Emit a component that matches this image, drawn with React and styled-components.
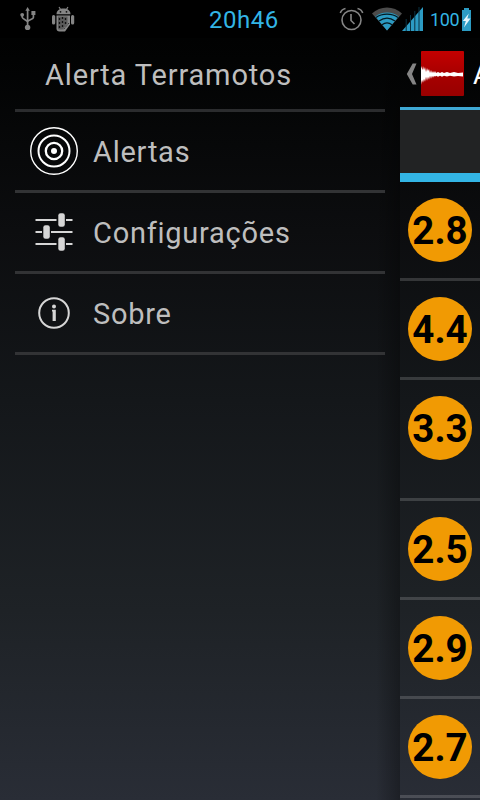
import styled, { createGlobalStyle } from 'styled-components';

const GlobalStyle = createGlobalStyle`
  body {
    margin: 0;
    background: #000;
    font-family: Roboto, 'Liberation Sans', sans-serif;
  }
`;

const Screen = styled.div`
  width: 480px;
  height: 800px;
  display: flex;
  flex-direction: column;
  overflow: hidden;
  background: linear-gradient(#000 0, #020303 60px, #0c0d0f 230px, #14171a 400px, #1e2226 610px, #292d36 800px);
`;

const StatusBar = styled.header`
  height: 38px;
  flex: none;
  display: grid;
  grid-template-columns: 209px 130px 1fr;
  align-items: center;
  background: #000;
  color: #33b5e5;
`;

const StatusIcons = styled.div`
  display: flex;
  align-items: center;
  gap: ${({ $gap }) => $gap || 0}px;
  padding-left: ${({ $left }) => $left || 0}px;

  svg {
    flex: none;
  }
`;

const Clock = styled.span`
  font-size: 24px;
  line-height: 36px;
  letter-spacing: 0.5px;
  padding-top: 2px;
`;

const BatteryLevel = styled.span`
  width: 32px;
  font-size: 18px;
  line-height: 36px;
  letter-spacing: -0.4px;
  padding-top: 2px;
`;

const Content = styled.div`
  flex: 1;
  display: flex;
  min-height: 0;
`;

const Drawer = styled.nav`
  width: 400px;
  padding: 0 15px;
  box-sizing: border-box;
  background: linear-gradient(90deg, transparent 376px, rgba(0, 0, 0, 0.3) 400px);
`;

const DrawerTitle = styled.h1`
  height: 71px;
  margin: 0;
  padding-left: 30px;
  border-bottom: 3px solid #2b2c2e;
  color: #bebebe;
  font-size: 29px;
  font-weight: 400;
  line-height: 75px;
  letter-spacing: 0.85px;
`;

const MenuItem = styled.a`
  height: 78px;
  display: flex;
  align-items: center;
  gap: 15px;
  padding-left: 15px;
  border-bottom: 3px solid #323335;
  color: #bebebe;
  font-size: 29px;
  letter-spacing: 0.75px;
`;

const MenuLabel = styled.span`
  padding-top: 2px;
`;

const MainPanel = styled.main`
  width: 80px;
  overflow: hidden;
`;

const ActionBar = styled.div`
  height: 69px;
  display: flex;
  align-items: center;
  padding-left: 5px;
  border-bottom: 3px solid #3fa9d5;
  color: #fff;
  font-size: 27px;

  svg {
    flex: none;
    margin-top: 2px;
  }
`;

const AppName = styled.span`
  margin-left: 9px;
  padding-top: 4px;
`;

const TabStrip = styled.div`
  height: 63px;
  background: #222324;
  border-bottom: 9px solid #33b5e5;
`;

const QuakeRow = styled.div`
  height: ${({ $tall }) => ($tall ? 118 : 96)}px;
  padding: 16px 8px 0;
  box-sizing: border-box;
`;

const Divider = styled.hr`
  height: 3px;
  margin: 0;
  border: 0;
  background: rgba(255, 255, 255, 0.16);
`;

const Magnitude = styled.div`
  width: 64px;
  height: 64px;
  border-radius: 50%;
  background: #f19a03;
  color: #000;
  font-size: 38.5px;
  font-weight: 700;
  line-height: 65px;
  text-align: center;
`;

const quakes = [
  { magnitude: '2.8' },
  { magnitude: '4.4' },
  { magnitude: '3.3', tall: true },
  { magnitude: '2.5' },
  { magnitude: '2.9' },
  { magnitude: '2.7' },
];

const UsbIcon = () => (
  <svg width="16" height="24" viewBox="0 0 16 24" fill="none" stroke="#858585" strokeWidth="1.7">
    <path d="M7.6 3v17M2.2 7v3.3c0 1.7 5.2 2.6 5.4 4.8M13.4 6v4.4c0 1.8-5.6 2.3-5.8 4.6" />
    <path d="M7.6 0l2.2 3.8H5.4z" fill="#858585" stroke="none" />
    <circle cx="2.2" cy="7.8" r="1.9" fill="#858585" stroke="none" />
    <path d="M11.4 4h4v4h-4z" fill="#858585" stroke="none" />
    <circle cx="7.6" cy="20.4" r="2.7" fill="#858585" stroke="none" />
  </svg>
);

const AndroidIcon = () => (
  <svg width="24" height="26" viewBox="0 0 24 26" fill="#858585">
    <path d="M7 1l2 3M16 1l-2 3" stroke="#858585" strokeWidth="1.2" />
    <path d="M4.500 8.200C4.500 4.500 7.500 2.600 11.500 2.600s7 1.900 7 5.600z" />
    <rect x="0" y="9" width="3.200" height="9.500" rx="1.500" />
    <rect x="19" y="9" width="3.200" height="9.500" rx="1.500" />
    <path d="M4.500 9.500H18v9L13 25.500H7.500c-2 0-3-1-3-3z" />
    <path d="M6 10.500h9.500v7l-5 6H7.500c-1 0-1.500-.5-1.500-1.500z" fill="#5a5a5a" />
    <path d="M7.500 12v10M10.500 11v11M13.500 12v6" stroke="#111" strokeWidth="1.300" strokeDasharray="2 2" />
    <path d="M17 17l-6 7" stroke="#333" strokeDasharray="2 1" />
    <circle cx="8.500" cy="5.800" r="0.900" fill="#111" />
    <circle cx="14.500" cy="5.800" r="0.900" fill="#111" />
  </svg>
);

const AlarmIcon = () => (
  <svg width="26" height="24" viewBox="0 0 26 24" fill="none" stroke="#858585" strokeWidth="1.600">
    <circle cx="12.500" cy="13" r="9.500" />
    <path d="M12 7v6.500l3.500 3.500M1.300 6C2 3.800 4 2 6.500 1.500M18.500 1.500C21 2 23 3.800 23.700 6" />
  </svg>
);

const WifiIcon = () => (
  <svg width="30" height="24" viewBox="0 0 30 24">
    <path d="M0 6.500C8-1.500 22-1.500 30 6.500L15 23.500z" fill="#4b4b4b" />
    <path d="M3.300 9.500C10 4 20 4 26.700 9.500L15 23.500z" fill="#2c9bc3" />
    <path
      d="M4 10.500C10 6 20 6 26 10.500M7 14c5-3.500 11-3.500 16 0M10 17.700c3-2.200 7-2.200 10 0"
      fill="none"
      stroke="#04171e"
      strokeWidth="1.300"
    />
  </svg>
);

const SignalIcon = () => (
  <svg width="21" height="24" viewBox="0 0 21 24">
    <path d="M0 24L21 0v24z" fill="#2c9bc3" />
    <path d="M4.200 12v12M8.500 8v16M12.800 4v20M17 0v24" stroke="#0b3342" strokeWidth="1" />
  </svg>
);

const BatteryIcon = () => (
  <svg width="9" height="23" viewBox="0 0 9 23">
    <path d="M2 0h5v2h2v21H0V2h2z" fill="#2c9bc3" />
    <path d="M6.800 5.500L.8 13h3l-1.800 6.500L8.500 10.500H5.300z" fill="#e4f4fa" />
  </svg>
);

const TargetIcon = () => (
  <svg width="48" height="48" viewBox="0 0 48 48" fill="none" stroke="#fff">
    <circle cx="24" cy="24" r="23.300" strokeWidth="1.400" />
    <circle cx="24" cy="24" r="15.500" strokeWidth="2" />
    <circle cx="24" cy="24" r="8.200" strokeWidth="2.300" />
    <circle cx="24" cy="24" r="3" fill="#fff" stroke="none" />
  </svg>
);

const SlidersIcon = () => (
  <svg width="48" height="48" viewBox="0 0 48 48" fill="#d6d6d6">
    <path d="M5.500 11h21v2h-21zM36 11h6.500v2H36zM5.500 23H12v2H5.500zM21 23h21.500v2H21zM5.500 35h21v2h-21zM36 35h6.500v2H36z" />
    <rect x="28.300" y="5.300" width="6.500" height="13.400" rx="2.200" />
    <rect x="13.300" y="17.300" width="6.500" height="13.400" rx="2.200" />
    <rect x="28.300" y="29.300" width="6.500" height="13.400" rx="2.200" />
  </svg>
);

const InfoIcon = () => (
  <svg width="48" height="48" viewBox="0 0 48 48">
    <circle cx="24" cy="24" r="14.800" fill="none" stroke="#d6d6d6" strokeWidth="2" />
    <circle cx="24" cy="17.500" r="2" fill="#d6d6d6" />
    <path d="M22 20.800h3.800V32h-3.200v-9.500H22z" fill="#d6d6d6" />
  </svg>
);

const BackIcon = () => (
  <svg width="16" height="24" viewBox="0 0 16 24">
    <path d="M7.700 1.500h3.800L7 12l4.500 10.500H7.700L1.800 12z" fill="#858585" />
  </svg>
);

const SeismographIcon = () => (
  <svg width="43" height="45" viewBox="0 0 43 45">
    <defs>
      <linearGradient id="red" x1="0" y1="0" x2="0" y2="1">
        <stop offset="0" stopColor="#c40000" />
        <stop offset="0.500" stopColor="#a80000" />
        <stop offset="1" stopColor="#980000" />
      </linearGradient>
    </defs>
    <rect width="43" height="45" rx="1" fill="url(#red)" />
    <path
      d="M0 15l1.500 4 .5-4 1 4 1-3 1 5 1-4 1 3 1-2 1 4 1-3 1 3 1-2 1 2 1-2 1 2 2-1 2 1 2-1 2 1 3-1 3 1 4-1 4 1 5-.5v4l-5-.5-4 .5-4-.7-3 .7-3-.7-2 1-2-1-2 1-2-1-1 1-1-1-1 2-1-2-1 3-1-3-1 4-1-3-1 4-1-4-1 5-1-3-1 4-1-3-1 5-1-4-1 5z"
      fill="#fff"
    />
  </svg>
);

const App = () => {
  return (
    <Screen>
      <GlobalStyle />
      <StatusBar>
        <StatusIcons $left={20} $gap={16}>
          <UsbIcon />
          <AndroidIcon />
        </StatusIcons>
        <Clock>20h46</Clock>
        <StatusIcons>
          <AlarmIcon />
          <StatusIcons $left={7}>
            <WifiIcon />
          </StatusIcons>
          <SignalIcon />
          <StatusIcons $left={7}>
            <BatteryLevel>100</BatteryLevel>
            <BatteryIcon />
          </StatusIcons>
        </StatusIcons>
      </StatusBar>
      <Content>
        <Drawer>
          <DrawerTitle>Alerta Terramotos</DrawerTitle>
          <MenuItem>
            <TargetIcon />
            <MenuLabel>Alertas</MenuLabel>
          </MenuItem>
          <MenuItem>
            <SlidersIcon />
            <MenuLabel>Configurações</MenuLabel>
          </MenuItem>
          <MenuItem>
            <InfoIcon />
            <MenuLabel>Sobre</MenuLabel>
          </MenuItem>
        </Drawer>
        <MainPanel>
          <ActionBar>
            <BackIcon />
            <SeismographIcon />
            <AppName>A</AppName>
          </ActionBar>
          <TabStrip />
          {quakes.map(({ magnitude, tall }) => (
            <div key={magnitude}>
              <QuakeRow $tall={tall}>
                <Magnitude>{magnitude}</Magnitude>
              </QuakeRow>
              <Divider />
            </div>
          ))}
        </MainPanel>
      </Content>
    </Screen>
  );
};

export default App;
